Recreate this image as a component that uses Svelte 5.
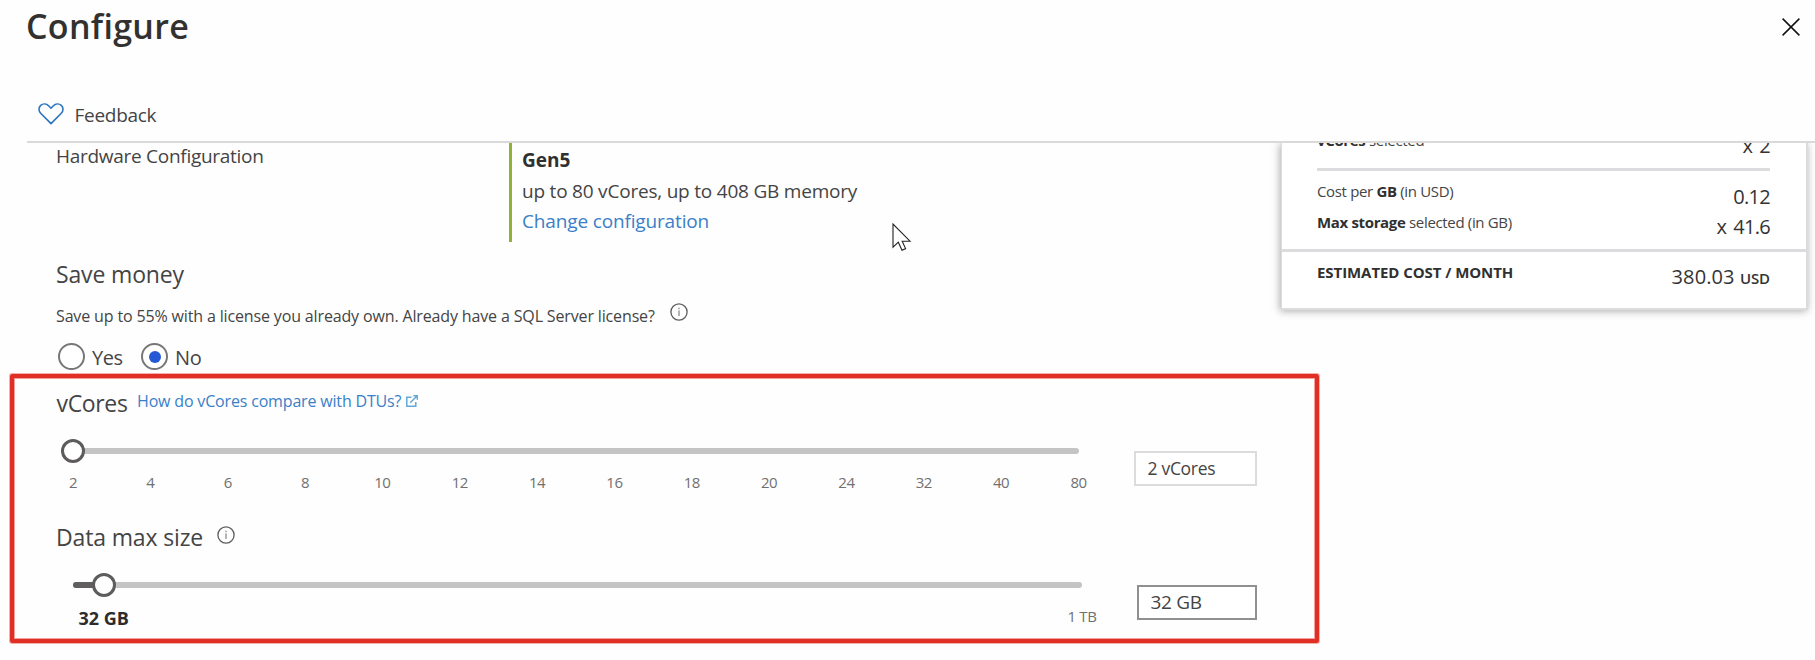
<script>
  const ticks = [2, 4, 6, 8, 10, 12, 14, 16, 18, 20, 24, 32, 40, 80];
  let licensed = $state('No');
</script>

{#snippet info()}
  <svg class="info" width="18" height="18" viewBox="0 0 18 18" fill="none">
    <circle cx="9" cy="9" r="8.1" stroke="#5c5c5c" stroke-width="1.3" />
    <path d="M9 7.6V13M9 4.8V6.2" stroke="#808080" stroke-width="1.2" />
  </svg>
{/snippet}

<div class="page">
  <header class="header">
    <h1>Configure</h1>
    <button class="close" aria-label="Close">
      <svg width="18" height="18" viewBox="0 0 18 18"><path d="M.6.6 17.4 17.4M17.4.6.6 17.4" stroke="#111" stroke-width="1.5" /></svg>
    </button>
  </header>

  <div class="toolbar">
    <svg width="26" height="22" viewBox="0 0 26 22" fill="none">
      <path d="M13 20.6 2.9 10.5C.3 7.9.5 4.3 2.7 2.4 5 .4 8.4.6 10.6 2.8L13 5.2l2.4-2.4c2.2-2.2 5.6-2.4 7.9-.4 2.2 1.9 2.4 5.5-.2 8.1Z" stroke="#2a74c0" stroke-width="1.6" stroke-linejoin="round" />
    </svg>
    <span>Feedback</span>
  </div>

  <main class="content">
    <div class="form">
      <section class="hardware">
        <div class="label">Hardware Configuration</div>
        <div class="detail">
          <div class="gen">Gen5</div>
          <div class="spec">up to 80 vCores, up to 408 GB memory</div>
          <a class="change">Change configuration</a>
        </div>
      </section>

      <h2 class="save">Save money</h2>
      <div class="hint"><span>Save up to 55% with a license you already own. Already have a SQL Server license?</span>{@render info()}</div>
      <div class="radios">
        {#each ['Yes', 'No'] as option}
          <button class="radio" onclick={() => (licensed = option)}>
            <span class="ring">{#if licensed === option}<i></i>{/if}</span>
            <span class="option">{option}</span>
          </button>
        {/each}
      </div>

      <section class="vcores">
        <div class="title">
          <h2>vCores</h2>
          <a>How do vCores compare with DTUs?</a>
          <svg width="12" height="12" viewBox="0 0 12 12" fill="none" stroke="#64a9d8" stroke-width="1.5">
            <path d="M5.5 2.2H.8v9h9V7M4.2 7.8 11 1M7.3.8h4v4" />
          </svg>
        </div>
        <div class="control">
          <div class="slider">
            <div class="track"><b class="knob" style="left:0"></b></div>
            <div class="ticks">{#each ticks as t}<span>{t}</span>{/each}</div>
          </div>
          <div class="field">2 vCores</div>
        </div>
      </section>

      <section class="size">
        <div class="title"><h2>Data max size</h2>{@render info()}</div>
        <div class="control">
          <div class="slider">
            <div class="track"><b class="fill" style="width:30px"></b><b class="knob" style="left:30px"></b></div>
            <div class="range"><strong>32 GB</strong><span>1 TB</span></div>
          </div>
          <div class="field active">32 GB</div>
        </div>
      </section>
    </div>

    <aside class="summary">
      <div class="row first"><div class="name"><b>vCores</b> selected</div><div class="value">x 2</div></div>
      <div class="rule"></div>
      <div class="row"><div class="name">Cost per <b>GB</b> (in USD)</div><div class="value">0.12</div></div>
      <div class="row"><div class="name storage"><b>Max storage</b> selected (in GB)</div><div class="value">x 41.6</div></div>
      <div class="rule full"></div>
      <div class="row"><div class="name total">ESTIMATED COST / MONTH</div><div class="value sum">380.03 <small>USD</small></div></div>
    </aside>
  </main>

  <div class="highlight"></div>
  <svg class="cursor" width="20" height="29" viewBox="0 0 20 29">
    <path d="M1 1V24.2L6.3 19.2 10 27.2 13.6 25.6 10.2 18.2H18Z" fill="#fff" stroke="#222" stroke-width="1.1" />
  </svg>
</div>

<style>
  :global(body) { margin: 0; }
  .page { position: relative; box-sizing: border-box; width: 1815px; height: 660px; overflow: hidden; display: flex; flex-direction: column; background: #fefefe; color: #444; font-family: "Open Sans", "Noto Sans", sans-serif; white-space: nowrap; }
  h1, h2 { margin: 0; }
  a { color: #3a80c8; text-decoration: none; }
  button { border: 0; padding: 0; background: none; font: inherit; color: inherit; }
  svg { display: block; flex: none; }
  .header { display: flex; justify-content: space-between; align-items: flex-start; height: 100px; padding: 1px 15px 0 26px; box-sizing: border-box; }
  h1 { font-size: 34px; line-height: 50px; font-weight: 600; letter-spacing: .3px; color: #323130; }
  .close { margin-top: 17px; }
  .toolbar { display: flex; align-items: flex-start; box-sizing: border-box; height: 43px; margin-left: 27px; padding: 3px 0 0 11px; border-bottom: 2px solid #d9d9d9; }
  .toolbar span { margin-left: 10.5px; font-size: 19px; line-height: 24px; letter-spacing: -.28px; }
  .content { display: flex; flex: 1; min-height: 0; overflow: hidden; }
  .form { width: 1281px; flex: none; box-sizing: border-box; padding-left: 56px; }
  .hardware { display: flex; height: 99px; }
  .label { width: 453px; font-size: 19px; line-height: 26px; letter-spacing: -.28px; }
  .detail { display: flex; flex-direction: column; box-sizing: border-box; border-left: 3px solid #8fb339; padding: 1.5px 0 0 10px; font-size: 19px; line-height: 30.5px; }
  .gen { font-weight: 700; color: #303030; }
  .spec { padding-top: 1px; margin-bottom: -1px; letter-spacing: -.21px; }
  .change { letter-spacing: -.15px; }
  h2 { font-size: 23px; line-height: 30px; font-weight: 400; letter-spacing: -.15px; }
  .save { margin-top: 17px; }
  .hint { display: flex; height: 24px; margin-top: 15px; font-size: 16px; line-height: 24px; letter-spacing: -.145px; }
  .hint .info { margin: -1px 0 0 15px; }
  .radios { display: flex; gap: 18px; margin: 15px 0 0 2px; height: 27px; }
  .radio { display: flex; align-items: center; }
  .ring { display: grid; place-items: center; box-sizing: border-box; width: 27px; height: 27px; border: 2px solid #777; border-radius: 50%; background: #fff; }
  .ring i { width: 12px; height: 12px; border-radius: 50%; background: #2458d4; }
  .option { margin-left: 7px; padding-top: 2px; font-size: 20px; line-height: 27px; min-width: 31px; text-align: left; letter-spacing: -.4px; }
  .vcores { margin-top: 18px; height: 134px; }
  .title { display: flex; align-items: flex-start; height: 30px; }
  .vcores h2 { letter-spacing: -.35px; margin-left: .5px; }
  .title a { margin: 1px 0 0 9.5px; font-size: 16px; line-height: 24px; letter-spacing: -.17px; }
  .title svg:not(.info) { margin: 7px 0 0 4.5px; }
  .title .info { margin: 3.5px 0 0 14px; }
  .control { display: flex; align-items: flex-start; padding-left: 17px; }
  .slider { width: 1061px; padding-top: 30px; }
  .track { position: relative; width: 1006px; height: 6px; border-radius: 3px; background: #c4c4c4; }
  .size .track { width: 1009px; }
  .fill { display: block; height: 6px; border-radius: 3px; background: #605e5e; }
  .knob { position: absolute; top: -9px; margin-left: -12px; box-sizing: border-box; width: 24px; height: 24px; border: 3px solid #5d5b5b; border-radius: 50%; background: #fff; }
  .size .knob { margin-left: -11.5px; }
  .ticks { display: flex; margin: 18px 0 0 -38.7px; }
  .ticks span { width: 77.35px; text-align: center; font-size: 15px; line-height: 20px; letter-spacing: -.5px; color: #707070; }
  .field { box-sizing: border-box; width: 123px; height: 35px; margin-top: 33px; border: 2px solid #dcdcdc; padding-left: 11.5px; font-size: 17.5px; line-height: 31px; letter-spacing: -.3px; background: #fff; }
  .active { width: 120px; margin: 33px 0 0 3px; border-color: #909090; font-size: 19px; line-height: 31.5px; }
  .range { display: flex; justify-content: space-between; width: 1023.5px; margin-top: 18px; }
  .range strong { margin-left: 5.5px; font-size: 18px; line-height: 24px; color: #2c2c2c; }
  .range span { font-size: 15px; line-height: 20px; letter-spacing: -.35px; color: #707070; }
  .summary { flex: none; width: 524px; height: 165px; border: solid #dcdcde; border-width: 0 2px 2px 1px; background: #fff; box-shadow: -1px 1px 8px rgba(0, 0, 0, .34); }
  .row { display: flex; justify-content: space-between; align-items: flex-start; height: 30.8px; padding: 0 36px 0 35px; }
  .first { margin-top: -13px; margin-bottom: -.6px; }
  .name { font-size: 15px; line-height: 21.6px; letter-spacing: -.34px; }
  .name b, .total { color: #303030; font-weight: 700; }
  .storage, .total { padding-top: 1px; }
  .total { letter-spacing: -.07px; }
  .value { font-size: 20px; line-height: 32px; font-weight: 500; letter-spacing: -.7px; word-spacing: 2.5px; color: #333; }
  .value.sum { letter-spacing: .1px; font-weight: 400; word-spacing: 0; }
  .value small { font-size: 15px; font-weight: 600; letter-spacing: -.1px; }
  .rule { height: 3px; margin: 7.8px 36px 9.7px 35px; background: #dcdcde; }
  .rule.full { margin: 6.7px 0 9.4px; }
  .highlight { position: absolute; left: 10px; top: 374px; box-sizing: border-box; width: 1309px; height: 269px; border: 4px solid #e02f25; border-radius: 2px; box-shadow: 0 0 0 1px #f6b0ab, inset 0 0 0 1px #f3a09a; pointer-events: none; }
  .cursor { position: absolute; left: 892px; top: 223px; }
</style>
